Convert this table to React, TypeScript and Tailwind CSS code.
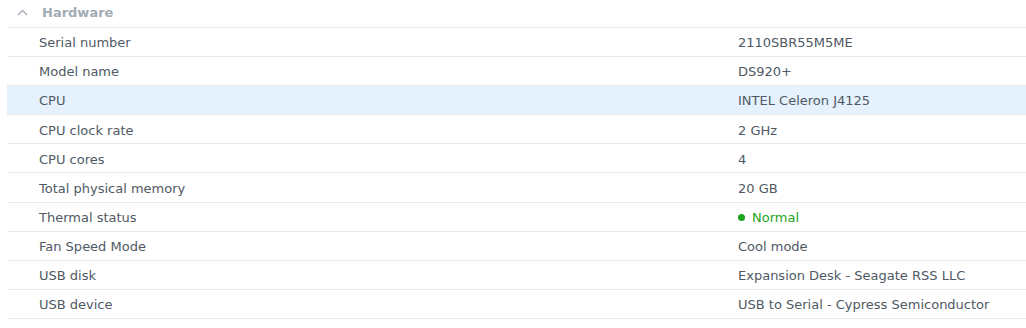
import React from "react";

const rows: [string, React.ReactNode][] = [
  ["Serial number", "2110SBR55M5ME"],
  ["Model name", "DS920+"],
  ["CPU", "INTEL Celeron J4125"],
  ["CPU clock rate", "2 GHz"],
  ["CPU cores", "4"],
  ["Total physical memory", "20 GB"],
  [
    "Thermal status",
    <span className="flex items-center gap-[7px] text-[#1ea51e]">
      <span className="w-[7px] h-[7px] rounded-full bg-[#1ea51e]" />
      Normal
    </span>,
  ],
  ["Fan Speed Mode", "Cool mode"],
  ["USB disk", "Expansion Desk - Seagate RSS LLC"],
  ["USB device", "USB to Serial - Cypress Semiconductor"],
];

export default function App() {
  return (
    <div
      className="w-[1026px] h-[328px] overflow-hidden bg-white pl-[7px] text-[13px] text-[#4f5964]"
      style={{ fontFamily: '"DejaVu Sans", Verdana, sans-serif' }}
    >
      <div className="h-[28px] flex items-center border-b border-[#e6eaf0] text-[#a3abb4] font-bold pb-[2px]">
        <svg width="11" height="7" viewBox="0 0 11 7" className="ml-[10px] mr-[14px]" fill="none" stroke="#a3abb4" strokeWidth="1.3">
          <path d="M1 6 L5.5 1.5 L10 6" />
        </svg>
        <span>Hardware</span>
      </div>
      {rows.map(([k, v], i) => (
        <div
          key={i}
          className={`h-[29.1px] flex items-center pt-[2px] border-b border-[#e6eaf0] ${k === "CPU" ? "bg-[#e5f1fc]" : ""}`}
        >
          <div className="w-[731px] pl-[32px]">{k}</div>
          <div>{v}</div>
        </div>
      ))}
    </div>
  );
}
